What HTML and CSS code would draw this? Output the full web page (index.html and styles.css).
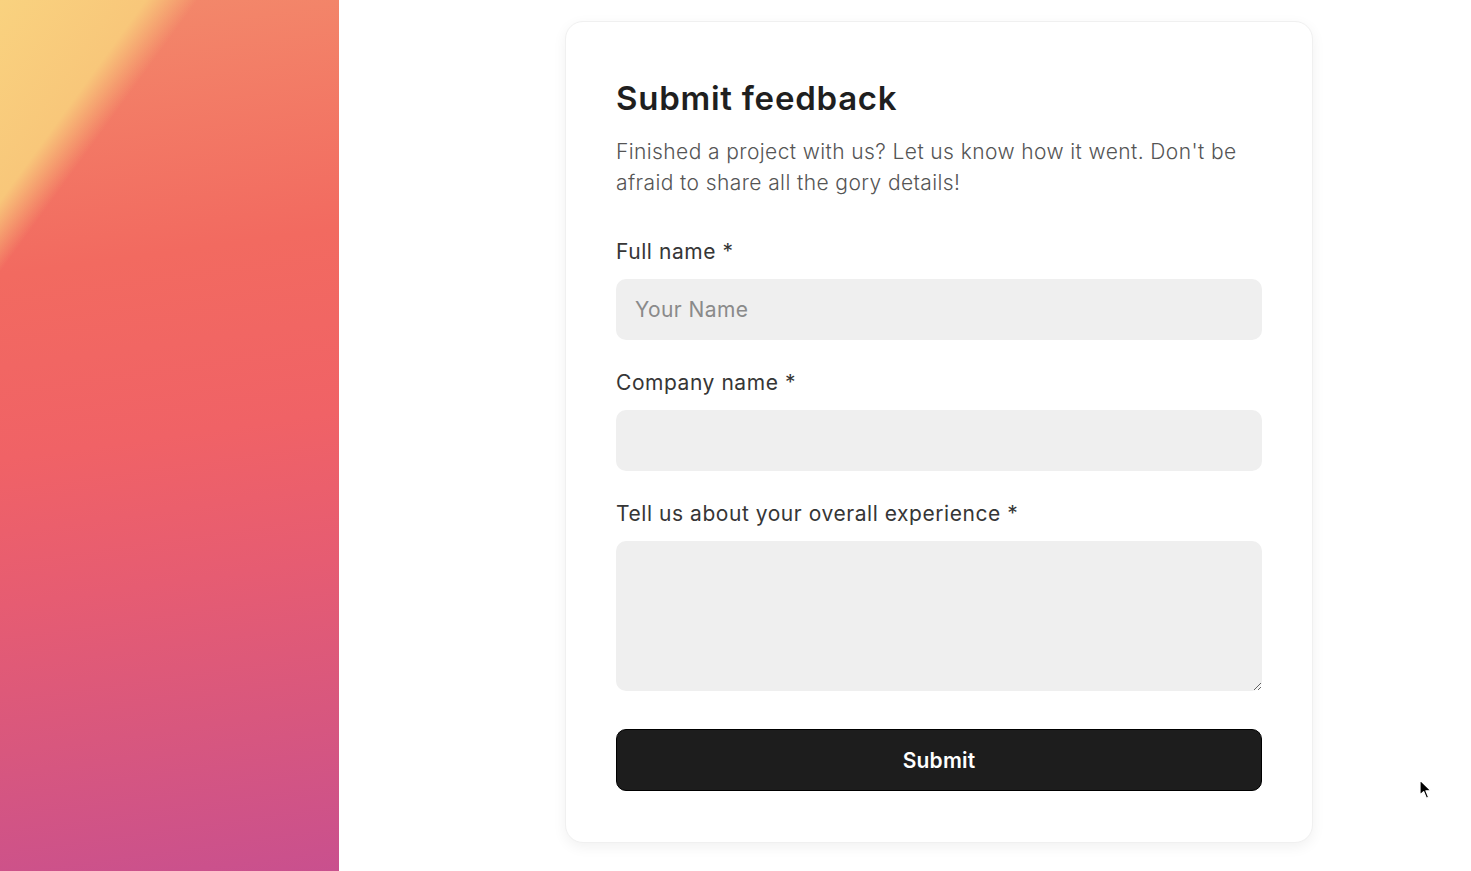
FILE: index.html
```html
<!DOCTYPE html>
<html lang="en">
<head>
    <meta charset="UTF-8">
    <meta name="viewport" content="width=device-width, initial-scale=1.0">
    <title>Submit feedback</title>
    <link rel="stylesheet" href="styles.css">
</head>
<body>
    <aside class="art"></aside>

    <main class="content">
        <form class="card">
            <h1>Submit feedback</h1>
            <p class="intro">Finished a project with us? Let us know how it went. Don't be afraid to share all the gory details!</p>

            <label for="fullName">Full name *</label>
            <input type="text" id="fullName" placeholder="Your Name">

            <label for="company">Company name *</label>
            <input type="text" id="company">

            <label for="experience">Tell us about your overall experience *</label>
            <textarea id="experience"></textarea>

            <button type="submit">Submit</button>
        </form>
    </main>

    <svg class="cursor" width="14" height="22" viewBox="0 0 14 22">
        <path d="M1 1 L1 16 L4.6 12.6 L7.4 19.2 L9.6 18.2 L6.9 11.8 L12 11.8 Z" fill="#000" stroke="#fff" stroke-width="1.2" stroke-linejoin="round"/>
    </svg>
</body>
</html>
```

FILE: styles.css
```css
html, body {
    margin: 0;
    padding: 0;
    height: 100%;
    background-color: #ffffff;
    font-family: Inter, "Noto Sans", sans-serif;
    color: #1d1d1d;
}

body {
    display: flex;
    overflow: hidden;
}

.art {
    width: 339px;
    flex-shrink: 0;
    background:
        linear-gradient(126deg, #f9d27f 0px, #f8c77a 118px, rgba(246, 140, 105, 0) 160px),
        linear-gradient(172deg, #f38a6b 0%, #f26a60 30%, #f06266 50%, #e65c72 66%, #d8577e 82%, #c9508e 100%);
}

.content {
    flex: 1;
    padding: 21px 0 0 226px;
}

.card {
    width: 646px;
    padding: 55px 50px 51px;
    background-color: #ffffff;
    border: 1px solid #f0f0f0;
    border-radius: 18px;
    box-shadow: 0 4px 14px rgba(0, 0, 0, 0.06);
    display: flex;
    flex-direction: column;
}

.card h1 {
    margin: 0;
    font-size: 33px;
    line-height: 42px;
    font-weight: 600;
    color: #1f1f1f;
    letter-spacing: 0.75px;
}

.intro {
    margin: 17px 0 40px;
    font-size: 21px;
    line-height: 31px;
    font-weight: 300;
    color: #555555;
    letter-spacing: 0.4px;
}

label {
    font-size: 21px;
    line-height: 28px;
    color: #363636;
    margin-bottom: 13px;
    letter-spacing: 0.55px;
}

input, textarea {
    box-sizing: border-box;
    width: 100%;
    border: none;
    border-radius: 10px;
    background-color: #efefef;
    font-family: inherit;
    font-size: 21px;
    color: #333333;
    padding: 0 19px;
    outline: none;
    letter-spacing: 0.4px;
}

input {
    height: 61px;
    margin-bottom: 29px;
}

textarea {
    height: 150px;
    padding-top: 16px;
    margin-bottom: 38px;
    resize: vertical;
}

input::placeholder {
    color: #8a8a8a;
}

button {
    height: 62px;
    border: 1px solid #000000;
    border-radius: 10px;
    background-color: #1d1d1d;
    color: #ffffff;
    font-family: inherit;
    font-size: 21px;
    font-weight: 600;
    letter-spacing: 0.2px;
    cursor: pointer;
}

.cursor {
    position: absolute;
    left: 1419px;
    top: 779px;
}
```
